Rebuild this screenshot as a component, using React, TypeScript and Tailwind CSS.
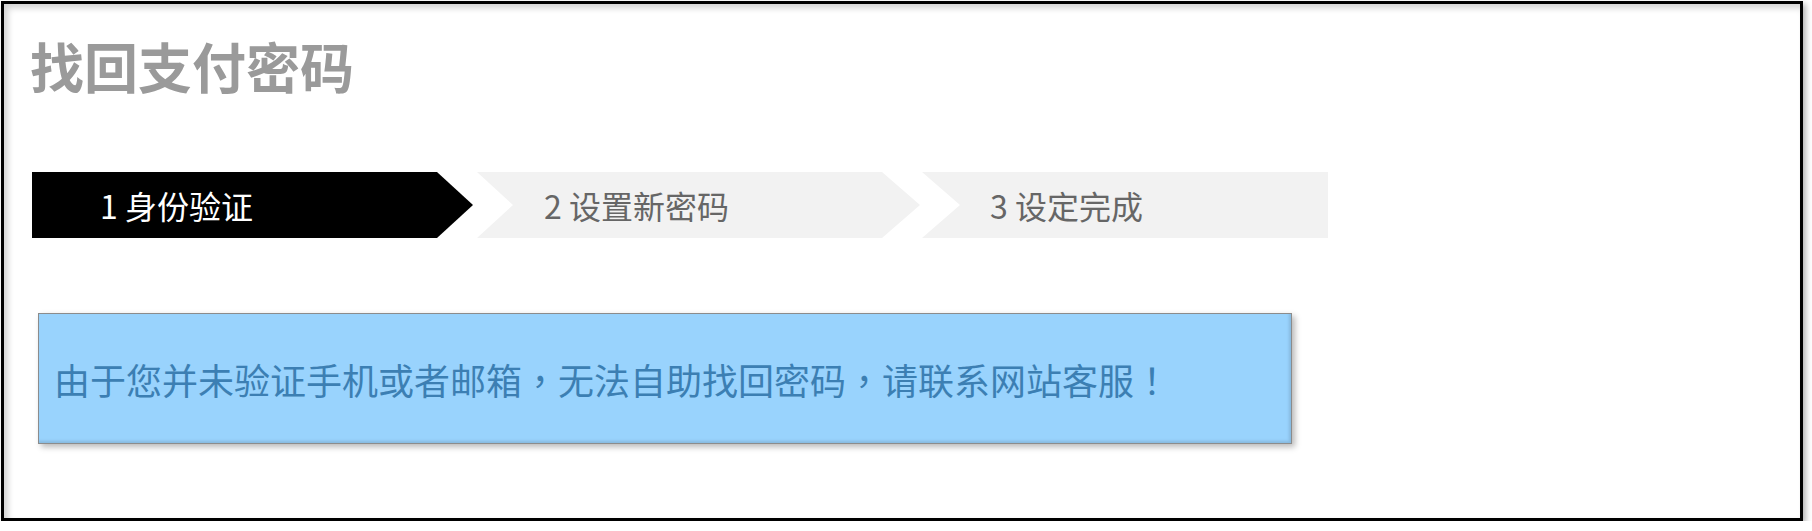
// pages/FindPayPassword.tsx

const steps = [
  { no: 1, label: "身份验证", active: true },
  { no: 2, label: "设置新密码", active: false },
  { no: 3, label: "设定完成", active: false },
];

function StepBar() {
  return (
    <div className="flex h-[66px]">
      <div className="flex h-full w-[441px] items-center bg-black pl-[68px] text-white [clip-path:polygon(0_0,calc(100%_-_36px)_0,100%_50%,calc(100%_-_36px)_100%,0_100%)]">
        <span className="text-[32px] leading-none">
          {steps[0].no} {steps[0].label}
        </span>
      </div>
      <div className="ml-[4px] flex h-full w-[443px] items-center bg-[#f2f2f2] pl-[67px] text-[#666666] [clip-path:polygon(0_0,calc(100%_-_38px)_0,100%_50%,calc(100%_-_38px)_100%,0_100%,36px_50%)]">
        <span className="text-[32px] leading-none">
          {steps[1].no} {steps[1].label}
        </span>
      </div>
      <div className="ml-[2px] flex h-full w-[406px] items-center bg-[#f2f2f2] pl-[68px] text-[#666666] [clip-path:polygon(0_0,100%_0,100%_100%,0_100%,38px_50%)]">
        <span className="text-[32px] leading-none">
          {steps[2].no} {steps[2].label}
        </span>
      </div>
    </div>
  );
}

// full-width punctuation sits centred in the original font
const Punct = ({ ch }: { ch: string }) => (
  <span className="font-['Noto_Sans_CJK_TC',sans-serif]">{ch}</span>
);

export default function App() {
  return (
    <div className="bg-white pl-[1px] pt-[1px] font-['Noto_Sans_CJK_SC','Noto_Sans',sans-serif]">
      <div className="h-[520px] w-[1802px] border-[3px] border-black bg-white shadow-[inset_4px_4px_6px_rgba(0,0,0,0.18),3px_3px_6px_rgba(0,0,0,0.3)]">
        <div className="pl-[28px] pt-[26px]">
          <h1 className="-ml-[2px] text-[54px] font-bold leading-[72px] text-[#9a9a9a]">
            找回支付密码
          </h1>
          <div className="mt-[70px]">
            <StepBar />
          </div>
          <div className="ml-[6px] mt-[75px] flex h-[131px] w-[1254px] items-center border border-[#8c8c8c] bg-[#99d3fd] pl-[15px] shadow-[inset_-2px_-2px_3px_rgba(0,0,0,0.12),3px_3px_6px_rgba(0,0,0,0.28)]">
            <p className="text-[36px] leading-none text-[#3c7fb3]">
              由于您并未验证手机或者邮箱<Punct ch="，" />无法自助找回密码<Punct ch="，" />请联系网站客服<Punct ch="！" />
            </p>
          </div>
        </div>
      </div>
    </div>
  );
}
